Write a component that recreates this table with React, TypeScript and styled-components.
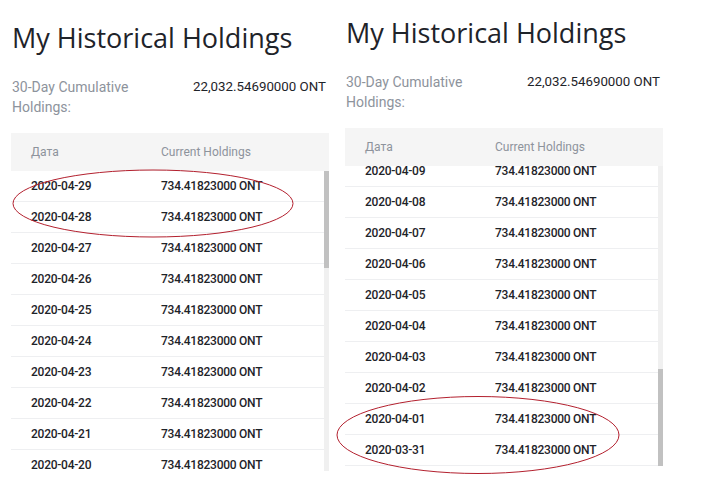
import styled, { createGlobalStyle } from "styled-components";

const GlobalStyle = createGlobalStyle`
    html, body {
        margin: 0;
        background: #ffffff;
    }
    body {
        font-family: Roboto, "Liberation Sans", sans-serif;
    }
`;

const ROW_H = 31;
const VIEW_H = 300;

const Page = styled.div`
    position: relative;
    display: flex;
    width: 703px;
    height: 495px;
    overflow: hidden;
`;

const Panel = styled.section<{ $lift: number }>`
    width: 334px;
    box-sizing: border-box;
    padding: ${(p) => 21 - p.$lift}px 5px 0 11px;
    display: flex;
    flex-direction: column;
`;

const Title = styled.h2`
    margin: 0 0 0 1px;
    font-family: "Open Sans", "Liberation Sans", sans-serif;
    font-size: 27px;
    line-height: 34px;
    font-weight: 400;
    color: #1e2329;
    white-space: nowrap;
`;

const Summary = styled.div`
    display: flex;
    align-items: flex-start;
    margin: 22px 0 16px 1px;
    line-height: 20px;
    white-space: nowrap;
`;

const SummaryLabel = styled.div`
    width: 181px;
    font-size: 14px;
    color: #8d939c;
`;

const SummaryValue = styled.div`
    font-size: 13.3px;
    color: #1e2329;
`;

const Table = styled.div`
    width: 318px;
`;

const HeadRow = styled.div`
    display: grid;
    grid-template-columns: 130px 1fr;
    align-items: center;
    height: 38px;
    padding-left: 20px;
    background: #f5f5f5;
    font-size: 12px;
    color: #8d939c;
`;

const Body = styled.div`
    display: flex;
    height: ${VIEW_H}px;
`;

const List = styled.div`
    flex: 1;
    overflow: hidden;
`;

const Track = styled.div`
    width: 5px;
    background: #f0f0f0;
`;

const Thumb = styled.div`
    background: #c1c1c1;
`;

const Row = styled.div`
    display: grid;
    grid-template-columns: 130px 1fr;
    align-items: center;
    height: ${ROW_H}px;
    box-sizing: border-box;
    padding-left: 20px;
    border-bottom: 1px solid #eeeff1;
    font-size: 12px;
    font-weight: 500;
    letter-spacing: -0.25px;
    color: #1e2329;
`;

const Marks = styled.svg`
    position: absolute;
    inset: 0;
    pointer-events: none;
`;

// 30 days back from 2020-04-29
const days: string[] = Array.from({ length: 30 }, (_, i) => {
    const d = new Date(Date.UTC(2020, 3, 29 - i));
    return d.toISOString().slice(0, 10);
});

function Holdings(props: { lift: number; scrolledToEnd?: boolean }) {
    const full = days.length * ROW_H;
    const offset = props.scrolledToEnd ? full - VIEW_H : 0;
    const thumbH = (VIEW_H * VIEW_H) / full;
    const thumbTop = (offset / full) * VIEW_H;

    // only the rows that fall in the visible window are rendered
    const first = Math.floor(offset / ROW_H);
    const last = Math.min(days.length, Math.ceil((offset + VIEW_H) / ROW_H));
    const visible = days.slice(first, last);

    return (
        <Panel $lift={props.lift}>
            <Title>My Historical Holdings</Title>
            <Summary>
                <SummaryLabel>
                    30-Day Cumulative
                    <br />
                    Holdings:
                </SummaryLabel>
                <SummaryValue>22,032.54690000 ONT</SummaryValue>
            </Summary>
            <Table>
                <HeadRow>
                    <span>Дата</span>
                    <span>Current Holdings</span>
                </HeadRow>
                <Body>
                    <List>
                        <div style={{ marginTop: first * ROW_H - offset }}>
                            {visible.map((day) => (
                                <Row key={day}>
                                    <span>{day}</span>
                                    <span>734.41823000 ONT</span>
                                </Row>
                            ))}
                        </div>
                    </List>
                    <Track>
                        <Thumb style={{ marginTop: thumbTop, height: thumbH }} />
                    </Track>
                </Body>
            </Table>
        </Panel>
    );
}

export default function App() {
    return (
        <>
            <GlobalStyle />
            <Page>
                <Holdings lift={0} />
                <Holdings lift={5} scrolledToEnd />
                <Marks width="703" height="495">
                    <ellipse cx="153" cy="203.5" rx="140" ry="33.5" fill="none" stroke="#b3202e" strokeWidth="1" />
                    <ellipse cx="478" cy="435" rx="141" ry="38.5" fill="none" stroke="#b3202e" strokeWidth="1" />
                </Marks>
            </Page>
        </>
    );
}
